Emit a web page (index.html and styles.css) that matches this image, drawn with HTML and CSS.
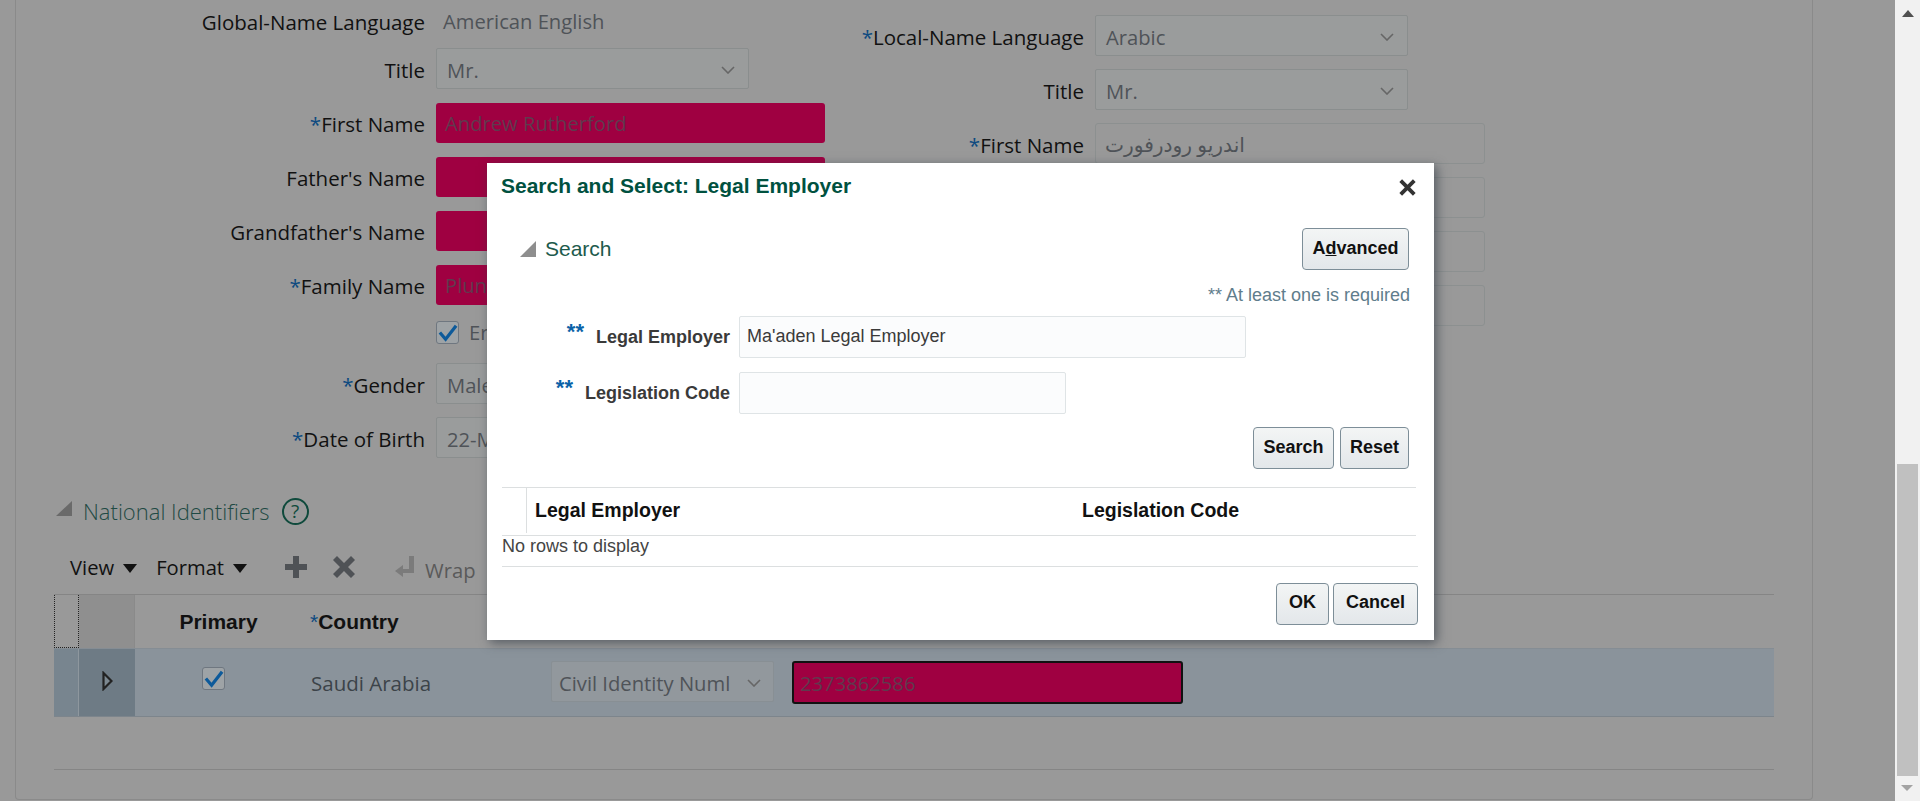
FILE: index.html
```html
<!DOCTYPE html>
<html>
	<head>
		<meta charset="utf-8">
		<title>Search and Select: Legal Employer</title>
		<link rel="stylesheet" href="styles.css">
	</head>
	<body>
		<div class="shell">
			<div class="page">
				<div class="frame">
					<div class="form-columns">
						<div class="form-col form-col-left">
							<div class="form-row form-row-text">
								<div class="form-label">Global-Name Language</div>
								<div class="form-value">American English</div>
							</div>
							<div class="form-row">
								<div class="form-label">Title</div>
								<div class="select select-short"><span>Mr.</span><svg class="chev" viewBox="0 0 14 8"><path d="M1 1l6 6 6-6"/></svg></div>
							</div>
							<div class="form-row">
								<div class="form-label"><span class="req">*</span>First Name</div>
								<div class="input input-red">Andrew Rutherford</div>
							</div>
							<div class="form-row">
								<div class="form-label">Father's Name</div>
								<div class="input input-red"></div>
							</div>
							<div class="form-row">
								<div class="form-label">Grandfather's Name</div>
								<div class="input input-red"></div>
							</div>
							<div class="form-row">
								<div class="form-label"><span class="req">*</span>Family Name</div>
								<div class="input input-red">Plun</div>
							</div>
							<div class="form-row form-row-check">
								<div class="form-label"></div>
								<div class="check-wrap">
									<div class="check"><svg viewBox="0 0 22 22"><path d="M3 11l6 7L20 4"/></svg></div>
									<span class="form-value">Er</span>
								</div>
							</div>
							<div class="form-row">
								<div class="form-label"><span class="req">*</span>Gender</div>
								<div class="select select-short"><span>Male</span></div>
							</div>
							<div class="form-row">
								<div class="form-label"><span class="req">*</span>Date of Birth</div>
								<div class="select select-short"><span>22-M</span></div>
							</div>
						</div>
						<div class="form-col form-col-right">
							<div class="form-row">
								<div class="form-label"><span class="req">*</span>Local-Name Language</div>
								<div class="select select-short"><span>Arabic</span><svg class="chev" viewBox="0 0 14 8"><path d="M1 1l6 6 6-6"/></svg></div>
							</div>
							<div class="form-row">
								<div class="form-label">Title</div>
								<div class="select select-short"><span>Mr.</span><svg class="chev" viewBox="0 0 14 8"><path d="M1 1l6 6 6-6"/></svg></div>
							</div>
							<div class="form-row">
								<div class="form-label"><span class="req">*</span>First Name</div>
								<div class="input input-plain">اندريو رودرفورت</div>
							</div>
							<div class="form-row">
								<div class="form-label"></div>
								<div class="input input-plain"></div>
							</div>
							<div class="form-row">
								<div class="form-label"></div>
								<div class="input input-plain"></div>
							</div>
							<div class="form-row">
								<div class="form-label"></div>
								<div class="input input-plain"></div>
							</div>
						</div>
					</div>

					<div class="section-head">
						<div class="disclose"></div>
						<div class="section-title">National Identifiers</div>
						<div class="help">?</div>
					</div>

					<div class="toolbar">
						<span class="tool-text">View</span><span class="tool-arrow"></span>
						<span class="tool-text tool-format">Format</span><span class="tool-arrow"></span>
						<svg class="tool-icon tool-plus" viewBox="0 0 22 22"><path d="M8 0h6v8h8v6h-8v8H8v-8H0V8h8z"/></svg>
						<svg class="tool-icon tool-x" viewBox="0 0 22 22"><path d="M4 0l7 7 7-7 4 4-7 7 7 7-4 4-7-7-7 7-4-4 7-7-7-7z"/></svg>
						<svg class="tool-icon tool-wrap" viewBox="0 0 22 22"><path d="M15 0h5v17H9v4L1 15l8-6v4h6z"/></svg>
						<span class="tool-wrap-text">Wrap</span>
					</div>

					<div class="grid">
						<div class="grid-head">
							<div class="cell-dots"></div>
							<div class="cell-gutter"></div>
							<div class="cell-primary">Primary</div>
							<div class="cell-country"><span class="req">*</span>Country</div>
						</div>
						<div class="grid-row">
							<div class="cell-dots"></div>
							<div class="cell-gutter"><svg class="row-arrow" viewBox="0 0 11 20"><path d="M1.5 2l8 8-8 8z"/></svg></div>
							<div class="cell-primary"><div class="check check-small"><svg viewBox="0 0 22 22"><path d="M3 11l6 7L20 4"/></svg></div></div>
							<div class="cell-country cell-value">Saudi Arabia</div>
							<div class="cell-type">
								<div class="select select-type"><span class="type-text">Civil Identity Numl</span><svg class="chev" viewBox="0 0 14 8"><path d="M1 1l6 6 6-6"/></svg></div>
							</div>
							<div class="cell-number">
								<div class="input input-red input-focus">2373862586</div>
							</div>
						</div>
					</div>
					<div class="page-line"></div>
				</div>
			</div>
			<div class="scrollbar">
				<div class="scroll-up"></div>
				<div class="scroll-track"><div class="scroll-thumb"></div></div>
				<div class="scroll-down"></div>
			</div>
		</div>

		<div class="modal">
			<div class="modal-title-row">
				<div class="modal-title">Search and Select: Legal Employer</div>
				<svg class="modal-close" viewBox="0 0 14 14"><path d="M1 3l2-2 4 4 4-4 2 2-4 4 4 4-2 2-4-4-4 4-2-2 4-4z"/></svg>
			</div>
			<div class="search-head">
				<div class="search-head-left">
					<div class="disclose disclose-small"></div>
					<div class="search-title">Search</div>
				</div>
				<div class="btn btn-advanced">A<u>d</u>vanced</div>
			</div>
			<div class="hint">** At least one is required</div>
			<div class="search-row">
				<div class="search-label"><span class="req-double">**</span>Legal Employer</div>
				<div class="search-input search-input-long">Ma'aden Legal Employer</div>
			</div>
			<div class="search-row search-row-second">
				<div class="search-label"><span class="req-double">**</span>Legislation Code</div>
				<div class="search-input search-input-code"></div>
			</div>
			<div class="search-actions">
				<div class="btn btn-search">Search</div>
				<div class="btn btn-reset">Reset</div>
			</div>
			<div class="result-head">
				<div class="result-spacer"></div>
				<div class="result-employer">Legal Employer</div>
				<div class="result-code">Legislation Code</div>
			</div>
			<div class="result-empty">No rows to display</div>
			<div class="modal-actions">
				<div class="btn btn-ok">OK</div>
				<div class="btn btn-cancel">Cancel</div>
			</div>
		</div>
	</body>
</html>
```

FILE: styles.css
```css
html, body
{
	margin: 0;
	height: 801px;
	overflow: hidden;
}
body
{
	background-color: #999999;
	font-family: "Open Sans", "DejaVu Sans", sans-serif;
	color: #111111;
}
.shell
{
	display: flex;
	height: 801px;
}
.page
{
	width: 1895px;
	background-color: #999999;
}
.frame
{
	box-sizing: border-box;
	margin-left: 15px;
	width: 1798px;
	height: 800px;
	padding-left: 38px;
	border-left: solid #8a8a8a 1px;
	border-right: solid #8a8a8a 1px;
	border-bottom: solid #8a8a8a 1px;
	border-radius: 0 0 4px 4px;
}

/* name form */
.form-columns
{
	display: flex;
	margin-left: -38px;
}
.form-col-left
{
	width: 820px;
}
.form-col-left .form-label
{
	width: 409px;
}
.form-col-right
{
	padding-top: 15px;
}
.form-col-right .form-label
{
	width: 248px;
}
.form-row
{
	display: flex;
	align-items: center;
	gap: 11px;
	height: 41px;
	margin-bottom: 13px;
}
.form-row-text
{
	height: 41px;
	margin-bottom: 7px;
}
.form-row-check
{
	height: 22px;
	margin-top: 16px;
	margin-bottom: 20px;
}
.form-label
{
	flex-shrink: 0;
	text-align: right;
	white-space: nowrap;
	font-size: 20.5px;
	font-weight: 500;
	padding-top: 2px;
}
.form-value
{
	font-size: 20.2px;
	font-weight: 500;
	color: #4f5358;
}
.form-row-text .form-value
{
	margin-left: 7px;
}
.req
{
	color: #0d4a80;
	font-weight: 400;
}
.select
{
	box-sizing: border-box;
	display: flex;
	align-items: center;
	justify-content: space-between;
	height: 41px;
	padding: 2px 13px 0 10px;
	background-color: #9a9c9c;
	border: solid #8a8e8e 1px;
	border-radius: 2px;
	font-size: 20.2px;
	font-weight: 500;
	color: #4f5358;
}
.select-short
{
	width: 313px;
}
.chev
{
	width: 14px;
	height: 8px;
}
.chev path
{
	fill: none;
	stroke: #666666;
	stroke-width: 1.6;
}
.input
{
	box-sizing: border-box;
	width: 390px;
	height: 41px;
	padding: 0 9px;
	line-height: 43px;
	font-size: 20.2px;
	font-weight: 500;
	border-radius: 3px;
}
.input-red
{
	background-color: #9f0041;
	color: #5f3a4e;
	width: 389px;
	height: 40px;
	margin-top: 1px;
	line-height: 41px;
}
.input-plain
{
	border: solid #8c9090 1px;
	line-height: 41px;
	color: #4f5358;
}
.input-focus
{
	border: solid #111111 2px;
	line-height: 40px;
	margin-top: 0;
	padding: 0 6px;
	width: 391px;
	height: 43px;
}
.check-wrap
{
	display: flex;
	align-items: center;
	gap: 10px;
}
.check
{
	box-sizing: border-box;
	width: 23px;
	height: 23px;
	background-color: #9ea3a6;
	border: solid #6f7780 1px;
	border-radius: 3px;
}
.check svg
{
	display: block;
	width: 21px;
	height: 21px;
}
.check path
{
	fill: none;
	stroke: #0d5a9a;
	stroke-width: 3.4;
}

/* national identifiers */
.section-head
{
	display: flex;
	align-items: center;
	height: 30px;
	margin-top: 25px;
	padding-left: 2px;
}
.disclose
{
	width: 0;
	height: 0;
	margin-top: -6px;
	border-left: solid transparent 16px;
	border-bottom: solid #6a6a6a 15px;
}
.section-title
{
	margin-left: 11px;
	font-size: 22px;
	font-weight: 300;
	color: #1f4a44;
}
.help
{
	box-sizing: border-box;
	width: 27px;
	height: 27px;
	margin-left: 12px;
	border: solid #0f4a3c 2px;
	border-radius: 50%;
	text-align: center;
	font-size: 19px;
	line-height: 23px;
	color: #0f4a3c;
}
.toolbar
{
	display: flex;
	align-items: center;
	height: 34px;
	margin-top: 24px;
	margin-left: 16px;
}
.tool-text
{
	font-size: 20.2px;
	color: #111111;
}
.tool-format
{
	margin-left: 19px;
}
.tool-arrow
{
	width: 0;
	height: 0;
	margin-left: 9px;
	margin-top: 3px;
	border-left: solid transparent 7px;
	border-right: solid transparent 7px;
	border-top: solid #111111 9px;
}
.tool-icon
{
	width: 22px;
	height: 22px;
	fill: #4f5256;
}
.tool-plus
{
	margin-left: 38px;
}
.tool-x
{
	margin-left: 26px;
}
.tool-wrap
{
	margin-left: 39px;
	fill: #7b7b7b;
}
.tool-wrap-text
{
	margin-left: 9px;
	margin-top: 5px;
	font-size: 20.2px;
	font-weight: 500;
	color: #5a5a5a;
}

.grid
{
	width: 1720px;
	margin-top: 10px;
	border-top: solid #858585 1px;
}
.grid-head
{
	display: flex;
	height: 53px;
	font-family: "Liberation Sans", sans-serif;
	font-weight: bold;
	font-size: 21px;
	line-height: 53px;
}
.grid-row
{
	display: flex;
	align-items: stretch;
	box-sizing: border-box;
	height: 69px;
	background-color: #8a939b;
	border-top: solid #858d94 1px;
	border-bottom: solid #7d858c 1px;
}
.cell-dots
{
	box-sizing: border-box;
	width: 25px;
	border-left: dotted #222222 1px;
	border-right: dotted #222222 1px;
	border-bottom: dotted #222222 1px;
}
.grid-row .cell-dots
{
	background-color: #78858f;
	border-left: none;
	border-bottom: none;
	border-right: solid #8e979e 1px;
}
.cell-gutter
{
	box-sizing: border-box;
	display: flex;
	align-items: center;
	justify-content: center;
	width: 56px;
	background-color: #8f8f8f;
	border-right: solid #8a8a8a 1px;
}
.grid-row .cell-gutter
{
	background-color: #6e7b85;
	border-right: none;
}
.row-arrow
{
	width: 11px;
	height: 20px;
	margin-top: -3px;
}
.row-arrow path
{
	fill: #7c8890;
	stroke: #222222;
	stroke-width: 2.2;
}
.cell-primary
{
	display: flex;
	justify-content: center;
	width: 167px;
}
.grid-row .cell-primary
{
	padding-top: 18px;
}
.check-small
{
	margin-right: 10px;
}
.cell-country
{
	width: 241px;
	box-sizing: border-box;
	padding-left: 8px;
}
.cell-value
{
	padding-top: 20px;
	padding-left: 9px;
	font-size: 20.5px;
	font-weight: 500;
	color: #3c4349;
}
.cell-type
{
	box-sizing: border-box;
	width: 241px;
	padding: 12px 0 0 8px;
}
.select-type
{
	width: 223px;
	padding: 2px 12px 0 7px;
	background-color: #92989d;
	border-color: #888f94;
}
.type-text
{
	width: 177px;
	overflow: hidden;
	white-space: nowrap;
}
.cell-number
{
	box-sizing: border-box;
	padding: 12px 0 0 8px;
}
.page-line
{
	width: 1720px;
	margin-top: 52px;
	border-top: solid #858585 1px;
}

/* scrollbar */
.scrollbar
{
	display: flex;
	flex-direction: column;
	align-items: center;
	width: 25px;
	background-color: #f1f1f1;
}
.scroll-up
{
	width: 0;
	height: 0;
	margin-top: 10px;
	border-left: solid transparent 6px;
	border-right: solid transparent 6px;
	border-bottom: solid #505050 7px;
}
.scroll-track
{
	flex: 1;
	width: 21px;
	padding-top: 447px;
}
.scroll-thumb
{
	height: 312px;
	background-color: #c0c0c0;
}
.scroll-down
{
	width: 0;
	height: 0;
	margin-bottom: 10px;
	margin-left: -2px;
	border-left: solid transparent 6px;
	border-right: solid transparent 6px;
	border-top: solid #a3a3a3 6px;
}

/* dialog */
.modal
{
	position: absolute;
	left: 487px;
	top: 163px;
	box-sizing: border-box;
	width: 947px;
	height: 477px;
	padding-left: 14px;
	padding-right: 16px;
	background-color: #ffffff;
	box-shadow: 3px 3px 10px rgba(50, 60, 70, 0.65);
	font-family: "Liberation Sans", sans-serif;
}
.modal-title-row
{
	display: flex;
	align-items: center;
	justify-content: space-between;
	height: 46px;
	padding-right: 1px;
}
.modal-title
{
	font-size: 21px;
	font-weight: bold;
	color: #00513f;
}
.modal-close
{
	width: 19px;
	height: 19px;
	margin-top: 2px;
	fill: #333333;
}
.search-head
{
	display: flex;
	align-items: center;
	justify-content: space-between;
	margin-top: 19px;
	padding-left: 19px;
	padding-right: 9px;
}
.search-head-left
{
	display: flex;
	align-items: center;
}
.disclose-small
{
	margin-top: 0;
	border-bottom-color: #8e8e8e;
	border-left-width: 16px;
	border-bottom-width: 16px;
}
.search-title
{
	margin-left: 9px;
	font-size: 21px;
	color: #1d5a4c;
}
.btn
{
	box-sizing: border-box;
	height: 42px;
	line-height: 38px;
	text-align: center;
	font-size: 18px;
	font-weight: bold;
	color: #111111;
	background: linear-gradient(#f3f5f5, #e3e7ea);
	border: solid #7d8e98 1px;
	border-radius: 4px;
}
.btn-advanced
{
	width: 107px;
}
.hint
{
	height: 22px;
	margin-top: 14px;
	padding-right: 8px;
	text-align: right;
	font-size: 18px;
	line-height: 22px;
	color: #5f7d8c;
}
.search-row
{
	display: flex;
	align-items: center;
	gap: 9px;
	margin-top: 10px;
}
.search-row-second
{
	margin-top: 14px;
}
.search-label
{
	width: 229px;
	padding-bottom: 3px;
	text-align: right;
	font-size: 18px;
	font-weight: bold;
	color: #3a3a3a;
}
.req-double
{
	position: relative;
	top: -4px;
	margin-right: 12px;
	font-size: 22px;
	color: #0b63a8;
}
.search-input
{
	box-sizing: border-box;
	height: 42px;
	padding: 0 7px;
	line-height: 38px;
	font-size: 18px;
	color: #3a3a3a;
	background-color: #fbfcfd;
	border: solid #dfe4e6 1px;
	border-radius: 2px;
}
.search-input-long
{
	width: 507px;
}
.search-input-code
{
	width: 327px;
}
.search-actions
{
	display: flex;
	justify-content: flex-end;
	gap: 6px;
	margin-top: 13px;
	padding-right: 9px;
}
.btn-search
{
	width: 81px;
}
.btn-reset
{
	width: 69px;
}
.result-head
{
	display: flex;
	align-items: center;
	height: 49px;
	margin-top: 18px;
	margin-left: 1px;
	margin-right: 2px;
	padding-bottom: 2px;
	border-top: solid #dcdfe0 1px;
	border-bottom: solid #dcdfe0 1px;
	box-sizing: border-box;
	font-size: 19.5px;
	font-weight: bold;
	color: #111111;
}
.result-spacer
{
	width: 24px;
	height: 100%;
	border-right: solid #dcdfe0 1px;
}
.result-employer
{
	width: 547px;
	padding-left: 8px;
}
.result-code
{
	flex: 1;
}
.result-empty
{
	height: 30px;
	margin-left: 1px;
	border-bottom: solid #dcdfe0 1px;
	font-size: 18px;
	line-height: 20px;
	color: #444444;
}
.modal-actions
{
	display: flex;
	justify-content: flex-end;
	gap: 4px;
	margin-top: 16px;
}
.btn-ok
{
	width: 53px;
}
.btn-ok, .btn-cancel
{
	line-height: 37px;
}
.btn-cancel
{
	width: 85px;
}
```
